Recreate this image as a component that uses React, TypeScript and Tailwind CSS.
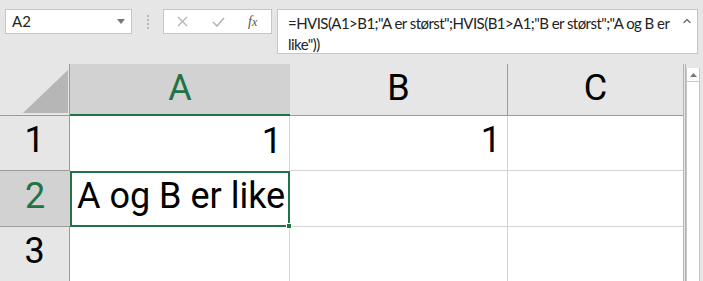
import { ChevronUp } from 'lucide-react';

// 셀 폰트 (Calibri 대신 Roboto)
const cellFont = "font-['Roboto',_'Liberation_Sans',_sans-serif]";
const uiFont = "font-['Lato',_'Open_Sans',_sans-serif]";

const GREEN = 'text-[#217346]';

const App = () => {
  return (
    <div className="w-[703px] h-[281px] overflow-hidden bg-[#e6e6e6] flex flex-col">
      {/* 수식 입력줄 */}
      <div className={`h-[64px] flex items-start pt-[9px] shrink-0 ${uiFont}`}>
        <div className="ml-[5px] w-[127px] h-[25px] bg-white border border-[#c6c6c6] flex items-center justify-between pl-[6px] pr-[6px]">
          <span className="text-[15px] text-[#222]">A2</span>
          <svg width="8" height="5" viewBox="0 0 8 5">
            <path d="M0 0 L8 0 L4 5 Z" fill="#777" />
          </svg>
        </div>
        <div className="w-[31px] h-[25px] flex flex-col items-center justify-center gap-[2px]">
          <span className="w-[2px] h-[2px] bg-[#b9b9b9]" />
          <span className="w-[2px] h-[2px] bg-[#b9b9b9]" />
          <span className="w-[2px] h-[2px] bg-[#b9b9b9]" />
          <span className="w-[2px] h-[2px] bg-[#b9b9b9]" />
        </div>
        <div className="w-[109px] h-[25px] bg-white border border-[#c6c6c6] flex items-center">
          <svg className="ml-[13px]" width="11" height="11" viewBox="0 0 11 11">
            <path d="M1 1 L10 10 M10 1 L1 10" stroke="#b3b3b3" strokeWidth="1.3" />
          </svg>
          <svg className="ml-[24px]" width="13" height="10" viewBox="0 0 13 10">
            <path d="M1 5 L5 9 L12 1" stroke="#b3b3b3" strokeWidth="1.6" fill="none" />
          </svg>
          <span className="ml-[23px] text-[14px] italic text-[#555] font-['Liberation_Serif',_serif]">
            f<span className="text-[12px]">x</span>
          </span>
        </div>
        <div className="ml-[5px] w-[421px] h-[45px] bg-white border border-[#c6c6c6] flex">
          <div className="flex-1 pl-[10px] pt-[3px] text-[15px] leading-[21px] tracking-[-0.55px] text-[#222] whitespace-nowrap">
            =HVIS(A1&gt;B1;"A er størst";HVIS(B1&gt;A1;"B er størst";"A og B er
            <br />
            like"))
          </div>
          <div className="w-[16px] pt-[5px]">
            <ChevronUp size={12} color="#666" strokeWidth={2.5} />
          </div>
        </div>
      </div>

      {/* 시트 영역 */}
      <div className={`flex flex-1 ${cellFont}`}>
        <div className="grid grid-cols-[70px_220px_218px_175px] grid-rows-[52px_55px_56px_56px]">
          {/* 헤더 행 */}
          <div className="relative bg-[#e6e6e6] border-r border-b border-[#9b9b9b]">
            <svg className="absolute left-[23px] top-[6px]" width="45" height="43" viewBox="0 0 45 43">
              <path d="M45 0 L45 43 L0 43 Z" fill="#b6b6b6" />
            </svg>
          </div>
          <div className={`bg-[#d2d2d2] border-b-2 border-[#217346] flex items-end justify-center pb-[8px] text-[36px] leading-none ${GREEN}`}>
            A
          </div>
          <div className="bg-[#e6e6e6] border-r border-b border-[#9b9b9b] flex items-end justify-center pb-[9px] text-[36px] leading-none text-black">
            B
          </div>
          <div className="bg-[#e6e6e6] border-b border-[#9b9b9b] flex items-end justify-center pb-[9px] text-[36px] leading-none text-black">
            C
          </div>

          {/* 1행 */}
          <div className="bg-[#e6e6e6] border-r border-b border-[#9b9b9b] flex items-end justify-center pb-[12px] text-[36px] leading-none">
            1
          </div>
          <div className="bg-white border-r border-[#d4d4d4] flex items-end justify-end pr-[7px] pb-[12px] text-[36px] leading-none">
            1
          </div>
          <div className="bg-white border-r border-b border-[#d4d4d4] flex items-end justify-end pr-[6px] pb-[12px] text-[36px] leading-none">
            1
          </div>
          <div className="bg-white border-b border-[#d4d4d4]" />

          {/* 2행 (선택됨) */}
          <div className={`bg-[#d2d2d2] border-b border-[#9b9b9b] flex items-end justify-center pb-[12px] text-[36px] leading-none ${GREEN}`}>
            2
          </div>
          <div className="relative bg-white border-2 border-[#217346] flex items-end pl-[5px] pb-[11px] text-[36px] leading-none whitespace-nowrap">
            A og B er like
            <span className="absolute right-[-4px] bottom-[-4px] w-[6px] h-[6px] bg-[#217346] border border-white" />
          </div>
          <div className="bg-white border-r border-b border-[#d4d4d4]" />
          <div className="bg-white border-b border-[#d4d4d4]" />

          {/* 3행 */}
          <div className="bg-[#e6e6e6] border-r border-[#9b9b9b] flex items-end justify-center pb-[14px] text-[36px] leading-none">
            3
          </div>
          <div className="bg-white border-r border-[#d4d4d4]" />
          <div className="bg-white border-r border-[#d4d4d4]" />
          <div className="bg-white" />
        </div>

        {/* 세로 스크롤바 */}
        <div className="flex flex-1">
          <div className="w-[3px] border-l border-r border-[#b5b5b5] bg-[#e6e6e6]" />
          <div className="w-[14px] mt-[4px] bg-white border-l border-r border-[#c6c6c6] flex flex-col">
            <div className="h-[14px] border-b border-[#c6c6c6] flex items-center justify-center">
              <svg width="7" height="4" viewBox="0 0 7 4">
                <path d="M0 4 L3.5 0 L7 4 Z" fill="#777" />
              </svg>
            </div>
          </div>
        </div>
      </div>
    </div>
  );
};

export default App;
